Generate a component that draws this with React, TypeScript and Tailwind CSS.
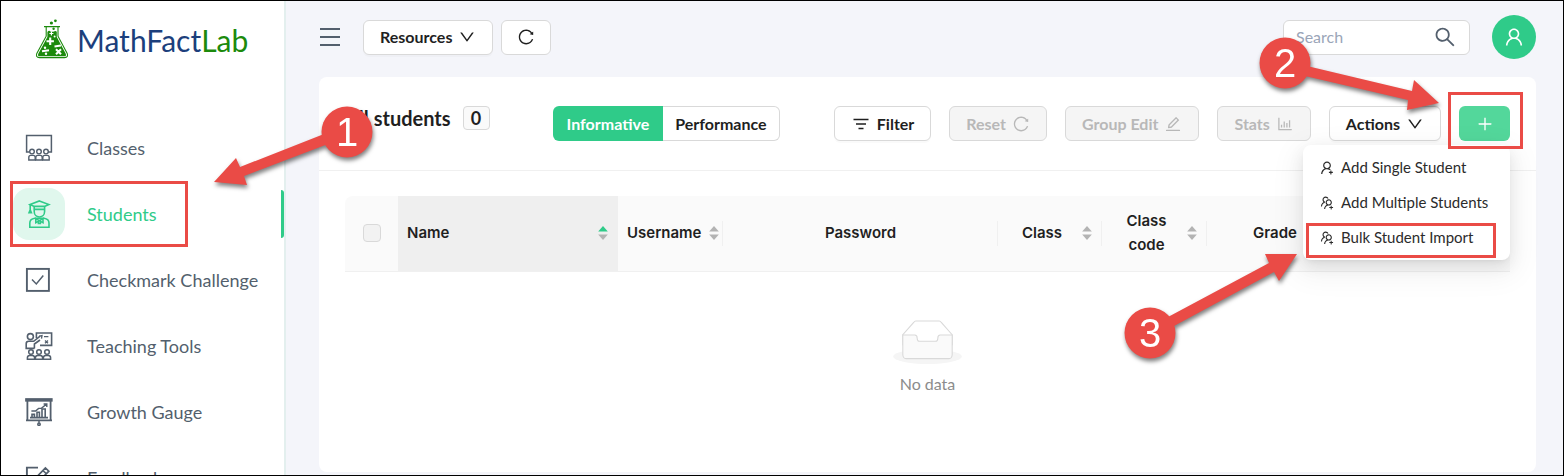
import { ReactNode } from "react";
import {
  AiOutlineBarChart,
  AiOutlineDown,
  AiOutlineEdit,
  AiOutlinePlus,
  AiOutlineReload,
  AiOutlineSearch,
  AiOutlineUser,
  AiOutlineUserAdd,
  AiOutlineUsergroupAdd,
} from "react-icons/ai";

const iconProps = {
  width: 28,
  height: 28,
  viewBox: "0 0 28 28",
  fill: "none",
  stroke: "currentColor",
  strokeWidth: 1.5,
  "aria-hidden": true,
};

function ClassesIcon() {
  return (
    <svg {...iconProps}>
      <path d="M4.5 18H1.6V1.6h24.8V18H23" />
      {[7, 14, 21].map((x) => (
        <g key={x} strokeWidth={1.4}>
          <circle cx={x} cy={17.6} r={2.3} />
          <path d={`M${x - 3.2} 26v-2.6q0-2 2-2h2.4q2 0 2 2V26z`} />
        </g>
      ))}
    </svg>
  );
}

function StudentsIcon() {
  return (
    <svg {...iconProps} strokeWidth={1.6}>
      <path d="M14.4 .9 23.8 4.6 19.5 6.4H9.300L5 4.600z" />
      <path d="M9.200 6.400v3h10.400v-3M9.200 9.400v2.200c0 3.200 2.400 5.400 5.200 5.400s5.200-2.200 5.200-5.400V9.400" />
      <path d="M5.200 4.800v5.400M4 12.800l1.200-3 1.200 3z" />
      <path d="M4.800 27.400v-4.400c0-3 1.800-4.200 5-4.700h9.200c3.200.5 5 1.700 5 4.700v4.400z" />
      <path d="M10.800 18.600v4l3.600-1.800 3.600 1.800v-4l-3.600 2z" />
      <path d="M13.400 21.500v2h2v-2" />
    </svg>
  );
}

function CheckmarkIcon() {
  return (
    <svg {...iconProps}>
      <rect x={1.9} y={2.9} width={22} height={22} strokeWidth={1.9} />
      <path d="m7 13.6 4.3 4.4 7-8.4" />
    </svg>
  );
}

function TeachingIcon() {
  return (
    <svg {...iconProps} strokeWidth={1.6}>
      <circle cx={5.4} cy={4.6} r={3} />
      <path d="M11.4 6V1H26.600v12.400H15" />
      <path d="M9.400 16.400H1.200v-4.600q0-2.500 2.500-2.500h5l6.400-5.100M9.400 16.400V12l5.600-4" />
      <path d="M14.200 4.200 17 3.600l-.5 3M19 4.600h4.400M20 8.400l3 2.800M23 8.400l-3 2.800" strokeWidth={1.3} />
      {[6, 14, 22].map((x) => (
        <g key={x} strokeWidth={1.5}>
          <circle cx={x} cy={20} r={2.3} />
          <path d={`M${x - 3.6} 27.3v-1.5q0-2.3 2.3-2.3h2.6q2.3 0 2.3 2.3v1.5z`} />
        </g>
      ))}
    </svg>
  );
}

function GrowthIcon() {
  return (
    <svg {...iconProps}>
      <rect x={0.9} y={0.9} width={26} height={2} fill="currentColor" />
      <path d="M2.400 3v19.200M25.600 3v19.200M1 22.400h26" strokeWidth={1.8} />
      <path d="M14 23v1.800" />
      <circle cx={14} cy={26.2} r={1.2} />
      <path d="M5 19.600h18M7 19.400v-3h2.400v3M12 19.400v-5.200h2.400v5.200M17 19.400V11h3.200v8.400" strokeWidth={1.6} />
      <path d="M6.400 13h4.200l3-2.600h2.800L21.600 6M18.600 6h3.200v3" strokeWidth={1.4} />
    </svg>
  );
}

function FeedbackIcon() {
  return (
    <svg {...iconProps}>
      <path d="M13 3.600H1.900V26h21V15" strokeWidth={1.9} />
      <path d="m11 17 1-4.400L20.400 4l3.400 3.200-8.400 8.600z" strokeWidth={1.7} />
      <path d="m18 6.600 3.400 3.200" />
    </svg>
  );
}

function Flask() {
  return (
    <svg width={34} height={40} viewBox="0 0 34 40" aria-hidden="true">
      <path
        d="M9 7.600h16M11.200 8v9.200L1.800 34.400Q.4 38.400 4.400 38.600h25.200q4-.2 2.600-4.200L23 17.200V8"
        fill="none"
        stroke="#1c8a0c"
        strokeWidth={1.1}
      />
      <path
        d="M12.400 13q1.500-2 3-.6 2 .6 3.600 0 1.600-1 2.800.4V18l8.800 16.400q1.300 2.900-1.600 2.900H5q-2.900 0-1.600-2.900L12.400 18z"
        fill="#1c8a0c"
      />
      <circle cx={16.4} cy={4} r={1.6} fill="#1c8a0c" />
      <circle cx={20.4} cy={1.8} r={1.4} fill="#1c8a0c" />
      <circle cx={18.6} cy={9.8} r={1.2} fill="#1c8a0c" />
      <path
        d="M15.200 18.600v7.400M11.500 22.300h7.400M19.500 27.500l6.400-1M7 32.300l7-1M21 30.300l5 5M26 30.300l-5 5"
        stroke="#fff"
        strokeWidth={2.1}
      />
      <path d="M14.400 14.500h4M16.400 12.500v4" stroke="#fff" strokeWidth={1.2} />
      <circle cx={10} cy={28.8} r={1.2} fill="#fff" />
      <circle cx={11} cy={34.8} r={1.2} fill="#fff" />
      <circle cx={19.6} cy={17.6} r={1} fill="#fff" />
    </svg>
  );
}

const navItems = [
  { label: "Classes", icon: <ClassesIcon /> },
  { label: "Students", icon: <StudentsIcon />, active: true },
  { label: "Checkmark Challenge", icon: <CheckmarkIcon /> },
  { label: "Teaching Tools", icon: <TeachingIcon /> },
  { label: "Growth Gauge", icon: <GrowthIcon /> },
  { label: "Feedback", icon: <FeedbackIcon /> },
];

function Sidebar() {
  return (
    <aside className="flex w-[285px] shrink-0 flex-col overflow-hidden border-r-2 border-[#e3efee] bg-white">
      <a href="#home" className="ml-[34px] mt-[17px] flex items-center gap-2 text-[30px] leading-10 text-[#1c3f7c]">
        <Flask />
        <span className="pt-0.5">
          MathFact<span className="text-[#1c8a0c]">Lab</span>
        </span>
      </a>
      <nav className="mt-[62px] flex flex-col gap-[14px]">
        {navItems.map((item) => (
          <a
            key={item.label}
            href={`#${item.label}`}
            className={`relative flex h-[52px] shrink-0 items-center pl-3 text-lg ${
              item.active ? "text-[#2fcb89]" : "text-[#535f6d]"
            }`}
          >
            <span
              className={`flex size-[52px] items-center justify-center rounded-2xl ${
                item.active ? "bg-[#e0f7ed]" : ""
              }`}
            >
              {item.icon}
            </span>
            <span className="ml-[22px]">{item.label}</span>
            {item.active ? (
              <>
                <span className="absolute right-0 top-0.5 h-12 w-[3px] rounded-r-full bg-[#2fcb89]" />
                <span className="absolute -bottom-[7px] -top-[7px] left-[9px] w-[178px] border-3 border-[#ea4b46]" />
              </>
            ) : null}
          </a>
        ))}
      </nav>
    </aside>
  );
}

type ButtonProps = { children: ReactNode; disabled?: boolean };

function Button({ children, disabled }: ButtonProps) {
  return (
    <button
      type="button"
      disabled={disabled}
      className={`flex h-[35px] items-center gap-1.5 rounded-md border border-[#d9d9d9] px-4 text-base font-bold whitespace-nowrap ${
        disabled ? "bg-[#f5f5f5] text-[#b8b8b8]" : "bg-white text-[#1f1f1f] shadow-[0_2px_0_rgba(0,0,0,0.02)]"
      }`}
    >
      {children}
    </button>
  );
}

function TopBar() {
  return (
    <header className="flex h-[76px] items-center pb-1 pl-[34px] pr-[27px]">
      <button type="button" aria-label="Toggle menu" className="flex w-5 flex-col gap-[6px]">
        <span className="h-0.5 bg-[#535f6d]" />
        <span className="h-0.5 bg-[#535f6d]" />
        <span className="h-0.5 bg-[#535f6d]" />
      </button>
      <div className="ml-[23px] flex gap-2">
        <Button>
          Resources <AiOutlineDown className="size-[18px]" />
        </Button>
        <button
          type="button"
          aria-label="Refresh"
          className="flex h-[35px] w-[50px] items-center justify-center rounded-md border border-[#d9d9d9] bg-white text-[#1f1f1f]"
        >
          <AiOutlineReload className="size-[18px]" />
        </button>
      </div>
      <label className="ml-auto flex h-[35px] w-[187px] items-center rounded-md border border-[#d9d9d9] bg-white px-3">
        <input
          type="search"
          aria-label="Search"
          placeholder="Search"
          className="w-full min-w-0 text-base text-[#535f6d] outline-none placeholder:text-[#9aa5b8]"
        />
        <AiOutlineSearch className="size-6 shrink-0 text-[#535f6d]" />
      </label>
      <button
        type="button"
        aria-label="Account"
        className="ml-[22px] flex size-11 items-center justify-center rounded-full bg-[#2fcb89] text-white"
      >
        <AiOutlineUser className="size-[22px]" />
      </button>
    </header>
  );
}

const addMenu = [
  { label: "Add Single Student", icon: <AiOutlineUserAdd /> },
  { label: "Add Multiple Students", icon: <AiOutlineUsergroupAdd /> },
  { label: "Bulk Student Import", icon: <AiOutlineUsergroupAdd />, marked: true },
];

function AddMenu() {
  return (
    <div className="absolute right-0 top-full mt-1 w-[207px] rounded-lg bg-white py-[5px] shadow-[0_6px_16px_0_rgba(0,0,0,0.08),0_3px_6px_-4px_rgba(0,0,0,0.12),0_9px_28px_8px_rgba(0,0,0,0.05)]">
      {addMenu.map((item) => (
        <button
          key={item.label}
          type="button"
          className="relative flex h-[35px] w-full items-center gap-1.5 pl-4 text-[15px] whitespace-nowrap text-[#2b2b2b]"
        >
          <span className="text-base">{item.icon}</span>
          {item.label}
          {item.marked ? (
            <span className="absolute -bottom-[3px] left-[3px] right-[14px] top-[3px] border-3 border-[#ea4b46]" />
          ) : null}
        </button>
      ))}
    </div>
  );
}

function Toolbar() {
  return (
    <div className="flex h-[94px] items-center border-b border-[#f0f0f0] px-[26px]">
      <div className="flex items-center gap-3 pb-[11px] font-bold text-[#1f1f1f]">
        <h1 className="text-xl">All students</h1>
        <span className="flex h-6 w-[27px] items-center justify-center rounded border border-[#d9d9d9] bg-[#fafafa] text-lg">
          0
        </span>
      </div>
      <div className="ml-[63px] flex h-[35px] text-base font-bold">
        <button type="button" className="rounded-l-md bg-[#2fcb89] px-[14px] text-white">
          Informative
        </button>
        <button type="button" className="rounded-r-md border border-l-0 border-[#d9d9d9] bg-white px-3 text-[#1f1f1f]">
          Performance
        </button>
      </div>
      <div className="ml-auto flex gap-[18px]">
        <Button>
          <svg width={20} height={16} viewBox="0 0 20 16" stroke="currentColor" strokeWidth={1.6} aria-hidden="true">
            <path d="M2.500 3.500h15M5 8h10M7.500 12.500h5" />
          </svg>
          Filter
        </Button>
        <Button disabled>
          Reset <AiOutlineReload className="size-[18px]" />
        </Button>
        <Button disabled>
          Group Edit <AiOutlineEdit className="size-[18px]" />
        </Button>
        <Button disabled>
          Stats <AiOutlineBarChart className="size-[18px]" />
        </Button>
        <Button>
          Actions <AiOutlineDown className="size-[18px]" />
        </Button>
        <div className="relative z-10">
          <button
            type="button"
            aria-label="Add student"
            className="flex h-[35px] w-[51px] items-center justify-center rounded-md bg-[#53d79b] text-white"
          >
            <AiOutlinePlus className="size-[18px]" />
          </button>
          <AddMenu />
          <span className="pointer-events-none absolute -bottom-2 -left-[11px] -right-[13px] -top-[14px] border-3 border-[#ea4b46]" />
        </div>
      </div>
    </div>
  );
}

function Sorter({ ascending }: { ascending?: boolean }) {
  return (
    <svg width={10} height={16} viewBox="0 0 10 16" className="shrink-0" aria-hidden="true">
      <path d="M.2 6.500 5 1l4.800 5.500z" fill={ascending ? "#2fcb89" : "#b3b3b3"} />
      <path d="M.2 9.500 5 15l4.800-5.500z" fill="#b3b3b3" />
    </svg>
  );
}

const columns = [
  { label: "Name", col: "w-[220px]", cell: "bg-[#efefef] pl-[9px] pr-[10px] text-left", sorted: true, sorter: true },
  { label: "Username", col: "w-[105px]", cell: "pl-[9px] pr-1 text-left", divider: true, sorter: true },
  { label: "Password", col: "", cell: "px-2 text-center", divider: true },
  { label: "Class", col: "w-[104px]", cell: "pl-2 pr-[10px] text-center", divider: true, sorter: true },
  { label: "Class code", col: "w-[105px]", cell: "pl-2 pr-[10px] text-center", divider: true, sorter: true },
  { label: "Grade", col: "w-[152px]", cell: "pl-2 pr-[10px] text-center", divider: true, sorter: true },
];

function StudentsTable() {
  return (
    <table className="w-full table-fixed">
      <colgroup>
        <col className="w-[53px]" />
        {columns.map((c) => (
          <col key={c.label} className={c.col} />
        ))}
        <col className="w-[151px]" />
      </colgroup>
      <thead>
        <tr className="h-[75px] border-b border-[#f0f0f0] font-[Inter,sans-serif] text-[#1f1f1f]">
          <th className="rounded-tl-lg bg-[#fafafa]">
            <input
              type="checkbox"
              disabled
              aria-label="Select all students"
              className="mx-auto block size-[18px] appearance-none rounded border border-[#d9d9d9] bg-[#f2f2f2]"
            />
          </th>
          {columns.map((c) => (
            <th key={c.label} className={`relative font-semibold ${c.sorted ? "" : "bg-[#fafafa]"} ${c.cell}`}>
              <div className="flex items-center gap-1 text-[15px] leading-6">
                <span className="flex-1">{c.label}</span>
                {c.sorter ? <Sorter ascending={c.sorted} /> : null}
              </div>
              {c.divider ? <span className="absolute right-0 top-[25px] h-[25px] w-px bg-[#f0f0f0]" /> : null}
            </th>
          ))}
          <th className="rounded-tr-lg bg-[#fafafa]" />
        </tr>
      </thead>
      <tbody>
        <tr>
          <td colSpan={8} className="pt-12">
            <div className="flex flex-col items-center gap-2 text-base text-[#8c8c8c]">
              <svg width={69} height={44} viewBox="0 0 64 41" aria-hidden="true">
                <g transform="translate(0 1)" fill="none" fillRule="evenodd">
                  <ellipse fill="#f5f5f5" cx="32" cy="33" rx="32" ry="7" />
                  <g stroke="#d9d9d9">
                    <path d="M55 12.760L44.854 1.258C44.367.474 43.656 0 42.907 0H21.093c-.749 0-1.460.474-1.947 1.257L9 12.761V22h46v-9.240z" />
                    <path
                      d="M41.613 15.931c0-1.605.994-2.930 2.227-2.931H55v18.137C55 33.260 53.680 35 52.050 35h-40.100C10.320 35 9 33.259 9 31.137V13h11.160c1.233 0 2.227 1.323 2.227 2.928v.022c0 1.605 1.005 2.901 2.237 2.901h14.752c1.232 0 2.237-1.308 2.237-2.913v-.007z"
                      fill="#fafafa"
                    />
                  </g>
                </g>
              </svg>
              No data
            </div>
          </td>
        </tr>
      </tbody>
    </table>
  );
}

type CalloutProps = {
  step: number;
  cx: number;
  cy: number;
  points: string;
  width: number;
  height: number;
  className: string;
};

// Numbered badge with an arrow, drawn over the page
function Callout({ step, cx, cy, points, width, height, className }: CalloutProps) {
  return (
    <svg
      width={width}
      height={height}
      className={`pointer-events-none absolute z-20 overflow-visible drop-shadow-[1px_3px_2px_rgba(0,0,0,0.5)] ${className}`}
    >
      <polygon points={points} fill="#ea4b46" />
      <circle cx={cx} cy={cy} r={25.5} fill="#ea4b46" />
      <text x={cx} y={cy + 14} textAnchor="middle" fill="#fff" fontSize={40} fontFamily="Liberation Sans, sans-serif">
        {step}
      </text>
    </svg>
  );
}

export default function App() {
  return (
    <div className="relative flex h-screen overflow-hidden border border-black bg-[#f4f5fa] font-[Lato,sans-serif]">
      <Sidebar />
      <div className="flex min-w-0 flex-1 flex-col">
        <TopBar />
        <main className="mb-[3px] ml-[33px] mr-[27px] flex-1 rounded-lg bg-white">
          <Toolbar />
          <div className="px-[26px] pt-[25px]">
            <StudentsTable />
          </div>
        </main>
      </div>
      <Callout
        step={1}
        cx={133}
        cy={26}
        points="0,76 22,52 26,61 110,28 114,38 30,70 33,79"
        width={160}
        height={80}
        className="left-[213px] top-[105px]"
      />
      <Callout
        step={2}
        cx={26}
        cy={26}
        points="180,66 155,43 153,54 48,29 46,39 149,63 148,73"
        width={180}
        height={74}
        className="right-[124px] top-[36px]"
      />
      <Callout
        step={3}
        cx={26}
        cy={79}
        points="173,0 141,0 145,9 44,63 50,72 150,18 155,27"
        width={173}
        height={105}
        className="right-[266px] top-[253px]"
      />
    </div>
  );
}
